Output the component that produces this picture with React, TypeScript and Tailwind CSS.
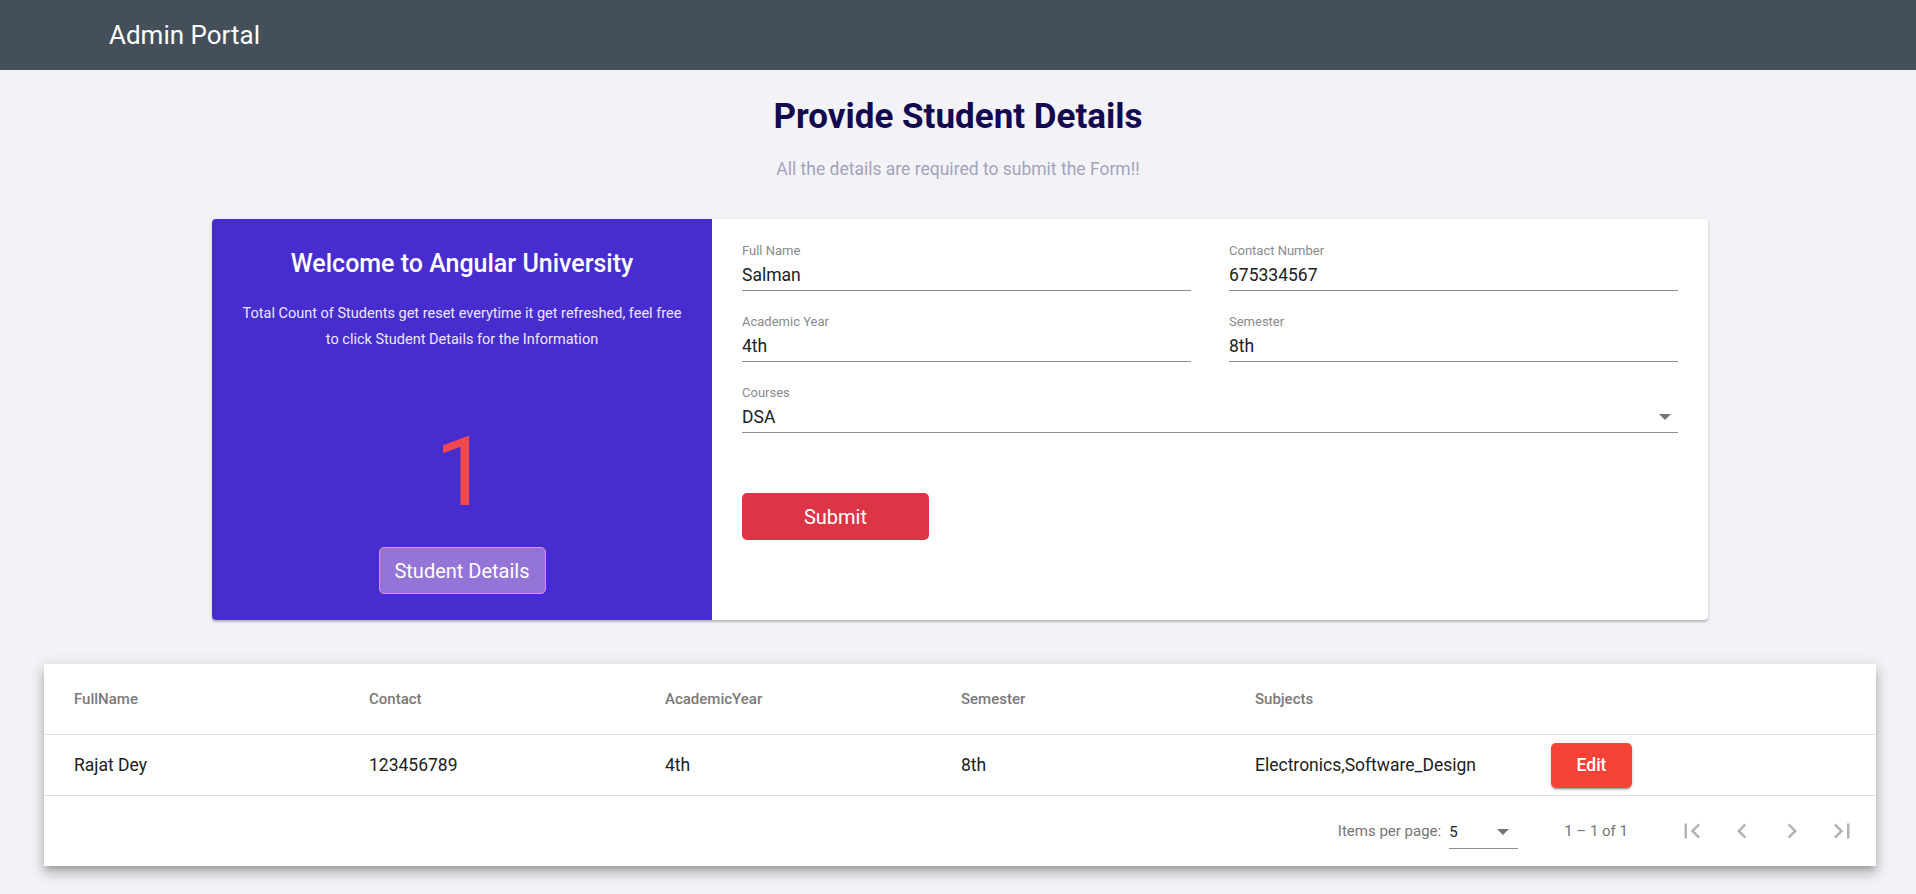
import React from "react";

interface Student {
  fullName: string;
  contact: string;
  academicYear: string;
  semester: string;
  subjects: string;
}

const students: Student[] = [
  {
    fullName: "Rajat Dey",
    contact: "123456789",
    academicYear: "4th",
    semester: "8th",
    subjects: "Electronics,Software_Design",
  },
];

function Field({ label, value, select }: { label: string; value: string; select?: boolean }) {
  return (
    <div className="border-b border-[#8e8e8e] pb-[4px]">
      <div className="text-[13px] leading-[16px] text-[#8a8a8a]">{label}</div>
      <div className="mt-[5px] flex items-center justify-between">
        <span className="text-[17.5px] leading-[22px] text-[#212121]">{value}</span>
        {select && (
          <span className="mr-[7px] h-0 w-0 border-l-[6px] border-r-[6px] border-t-[6px] border-l-transparent border-r-transparent border-t-[#757575]" />
        )}
      </div>
    </div>
  );
}

function PageIcon({ d }: { d: string }) {
  return (
    <button className="flex h-[50px] w-[50px] items-center justify-center">
      <svg className="h-[30px] w-[30px]" viewBox="0 0 24 24" fill="#b3b3b3">
        <path d={d} />
      </svg>
    </button>
  );
}

export default function App() {
  return (
    <div className="min-h-screen bg-[#f3f3f7] font-['Roboto',sans-serif] pb-[28px]">
      {/* Toolbar */}
      <header className="flex h-[70px] items-center bg-[#444f5a] pl-[109px]">
        <span className="text-[26px] text-white">Admin Portal</span>
      </header>

      {/* Heading */}
      <div className="mt-[27px] text-center">
        <h1 className="text-[35px] font-bold leading-[40px] text-[#12094f]">
          Provide Student Details
        </h1>
        <p className="mt-[21px] text-[17.5px] leading-[22px] text-[#a3a3ba]">
          All the details are required to submit the Form!!
        </p>
      </div>

      {/* Form card */}
      <div className="ml-[212px] mt-[39px] flex h-[401px] w-[1496px] overflow-hidden rounded-[4px] bg-white shadow-[0_2px_2px_rgba(0,0,0,0.2),0_1px_4px_rgba(0,0,0,0.08)]">
        <div className="flex w-[500px] flex-col items-center bg-[#472dcd] pt-[30px] text-center">
          <h2 className="text-[25px] font-medium leading-[30px] text-white">
            Welcome to Angular University
          </h2>
          <p className="mt-[22px] w-[452px] text-[14.5px] leading-[26px] text-[#ece8ff]">
            Total Count of Students get reset everytime it get refreshed, feel free to click
            Student Details for the Information
          </p>
          <div className="mt-[71px] text-[96px] leading-none text-[#f0484f]">1</div>
          <button className="mt-[27px] h-[47px] w-[167px] rounded-[5px] border border-[#e3a27c] bg-[#9474d6] text-[20px] text-white">
            Student Details
          </button>
        </div>

        <div className="flex-1 px-[30px] pt-[24px]">
          <div className="grid grid-cols-2 gap-x-[38px] gap-y-[23px]">
            <Field label="Full Name" value="Salman" />
            <Field label="Contact Number" value="675334567" />
            <Field label="Academic Year" value="4th" />
            <Field label="Semester" value="8th" />
            <div className="col-span-2">
              <Field label="Courses" value="DSA" select />
            </div>
          </div>
          <button className="mt-[60px] h-[47px] w-[187px] rounded-[5px] bg-[#dc3545] text-[20px] text-white">
            Submit
          </button>
        </div>
      </div>

      {/* Students table */}
      <div className="ml-[44px] mt-[44px] w-[1832px] bg-white shadow-[0_5px_5px_-3px_rgba(0,0,0,0.2),0_8px_10px_1px_rgba(0,0,0,0.14),0_3px_14px_2px_rgba(0,0,0,0.12)]">
        <div className="grid h-[71px] grid-cols-[295px_296px_296px_294px_296px_1fr] items-center border-b border-[#e0e0e0] pl-[30px] text-[15px] font-medium text-[#7a7a7a]">
          <div>FullName</div>
          <div>Contact</div>
          <div>AcademicYear</div>
          <div>Semester</div>
          <div>Subjects</div>
          <div />
        </div>
        {students.map((s) => (
          <div
            key={s.contact}
            className="grid h-[61px] grid-cols-[295px_296px_296px_294px_296px_1fr] items-center border-b border-[#e0e0e0] pl-[30px] text-[17.5px] text-[#212121]"
          >
            <div>{s.fullName}</div>
            <div>{s.contact}</div>
            <div>{s.academicYear}</div>
            <div>{s.semester}</div>
            <div>{s.subjects}</div>
            <div>
              <button className="h-[45px] w-[81px] rounded-[5px] bg-[#f44336] text-[17.5px] font-medium text-white shadow-[0_3px_1px_-2px_rgba(0,0,0,0.2),0_2px_2px_rgba(0,0,0,0.14),0_1px_5px_rgba(0,0,0,0.12)]">
                Edit
              </button>
            </div>
          </div>
        ))}

        {/* Paginator */}
        <div className="flex h-[70px] items-center justify-end pr-[9px] text-[15px] text-[#757575]">
          <span>Items per page:</span>
          <div className="ml-[8px] mt-[8px] flex w-[69px] items-center justify-between border-b border-[#8e8e8e] pb-[5px]">
            <span className="text-[#212121]">5</span>
            <span className="mr-[9px] h-0 w-0 border-l-[6px] border-r-[6px] border-t-[6px] border-l-transparent border-r-transparent border-t-[#757575]" />
          </div>
          <span className="ml-[46px] mr-[39px]">1 – 1 of 1</span>
          <PageIcon d="M18.41 16.59L13.82 12l4.59-4.59L17 6l-6 6 6 6zM6 6h2v12H6z" />
          <PageIcon d="M15.41 7.41L14 6l-6 6 6 6 1.41-1.41L10.83 12z" />
          <PageIcon d="M10 6L8.59 7.41 13.17 12l-4.58 4.59L10 18l6-6z" />
          <PageIcon d="M5.59 7.41L10.18 12l-4.59 4.59L7 18l6-6-6-6zM16 6h2v12h-2z" />
        </div>
      </div>
    </div>
  );
}
